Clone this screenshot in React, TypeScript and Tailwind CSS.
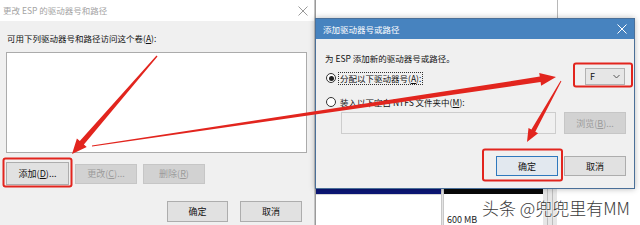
import React from "react";

const RED = "#e2251e";

function arrowPoints(
  x1: number, y1: number, x2: number, y2: number,
  w0: number, w1: number, hl: number, hw: number
): string {
  const dx = x2 - x1;
  const dy = y2 - y1;
  const len = Math.hypot(dx, dy);
  const ux = dx / len;
  const uy = dy / len;
  const nx = -uy;
  const ny = ux;
  const bx = x2 - ux * hl;
  const by = y2 - uy * hl;
  const p = (x: number, y: number) => `${x.toFixed(1)},${y.toFixed(1)}`;
  return [
    p(x1 + (nx * w0) / 2, y1 + (ny * w0) / 2),
    p(bx + (nx * w1) / 2, by + (ny * w1) / 2),
    p(bx + (nx * hw) / 2, by + (ny * hw) / 2),
    p(x2, y2),
    p(bx - (nx * hw) / 2, by - (ny * hw) / 2),
    p(bx - (nx * w1) / 2, by - (ny * w1) / 2),
    p(x1 - (nx * w0) / 2, y1 - (ny * w0) / 2),
  ].join(" ");
}

function CloseX({ color }: { color: string }) {
  return (
    <svg width="10" height="10" viewBox="0 0 10 10">
      <path d="M0.5 0.5 L9.5 9.5 M9.5 0.5 L0.5 9.5" stroke={color} strokeWidth="1" fill="none" />
    </svg>
  );
}

function Btn({
  children,
  w,
  h = 20,
  variant = "normal",
}: {
  children: React.ReactNode;
  w: number;
  h?: number;
  variant?: "normal" | "disabled" | "default";
}) {
  const cls =
    variant === "disabled"
      ? "bg-[#d2d2d2] border-[#c6c6c6] text-[#9b9b9b]"
      : variant === "default"
      ? "bg-[#e2e8ef] border-[#2f78bd] text-[#111]"
      : "bg-[#e1e1e1] border-[#adadad] text-[#111]";
  return (
    <div
      className={`flex items-center justify-center border text-[9px] leading-none ${cls}`}
      style={{ width: w, height: h }}
    >
      {children}
    </div>
  );
}

function Radio({ checked }: { checked: boolean }) {
  return (
    <div className="w-[10px] h-[10px] rounded-full border border-[#333] bg-white flex items-center justify-center">
      {checked && <div className="w-[5px] h-[5px] rounded-full bg-[#222]" />}
    </div>
  );
}

export default function App() {
  return (
    <div
      className="relative w-[640px] h-[225px] overflow-hidden bg-white text-[#111]"
      style={{ fontFamily: '"Noto Sans CJK SC", "Noto Sans", sans-serif' }}
    >
      {/* background window behind right dialog */}
      <div className="absolute left-[315px] top-0 w-[325px] h-[225px] border-l border-[#9a9a9a] bg-white">
        <div className="absolute left-[241px] top-0 w-px h-[18px] bg-[#b8b8b8]" />
        <div className="absolute left-0 top-[188px] w-[325px] h-[37px] flex">
          <div className="w-[125px] flex flex-col">
            <div className="h-[6px] bg-[#0c1676]" />
            <div className="h-px bg-[#d8d8d8]" />
            <div className="flex-1 bg-white" />
          </div>
          <div className="w-[3px] bg-[#e4e4e4] border-x border-[#c8c8c8]" />
          <div className="w-[99px] flex flex-col">
            <div className="h-[6px] bg-[#080808]" />
            <div className="flex-1 bg-white pl-[3px] pt-[21px] text-[9px] leading-none text-[#222]">600 MB</div>
          </div>
          <div className="w-[14px] bg-[#e6e6e6] flex justify-between px-[4px]">
            <div className="w-px bg-[#bdbdbd]" />
            <div className="w-px bg-[#bdbdbd]" />
          </div>
          <div className="flex-1 bg-white" />
        </div>
      </div>

      {/* left dialog */}
      <div className="absolute left-0 top-0 w-[315px] h-[225px] flex flex-col bg-[#f0f0f0] border-r border-[#c4c4c4]">
        <div className="h-[21px] bg-white flex items-center justify-between pl-[3px] pr-[6px] text-[8.5px] leading-none text-[#a3a3a3]">
          <span>更改 ESP 的驱动器号和路径</span>
          <CloseX color="#9a9a9a" />
        </div>
        <div className="flex flex-col pl-[6px] pt-[11px]">
          <div className="pl-[1px] h-[12px] leading-[12px] text-[8.5px]">
            可用下列驱动器号和路径访问这个卷(<u>A</u>):
          </div>
          <div className="mt-[8px] w-[301px] h-[101px] bg-white border border-[#ababab]" />
          <div className="mt-[9px] h-[23px] flex items-center gap-[6px]">
            <Btn w={63} h={23}>
              添加(<u>D</u>)...
            </Btn>
            <Btn w={62} variant="disabled">
              更改(<u>C</u>)...
            </Btn>
            <Btn w={62} variant="disabled">
              删除(<u>R</u>)
            </Btn>
          </div>
        </div>
        <div className="mt-[16px] flex justify-end gap-[12px] pr-[12px]">
          <Btn w={61} h={21}>确定</Btn>
          <Btn w={62} h={21}>取消</Btn>
        </div>
      </div>

      {/* right dialog */}
      <div className="absolute left-[315px] top-[18px] w-[320px] h-[171px] flex flex-col bg-[#f0f0f0] border border-[#4a6f98] shadow-[0_0_6px_rgba(0,0,0,0.28)]">
        <div className="h-[20px] bg-[#4783bf] flex items-center justify-between pl-[7px] pr-[7px] text-[8.5px] leading-none text-white">
          <span>添加驱动器号或路径</span>
          <CloseX color="#ffffff" />
        </div>
        <div className="flex flex-col pl-[9px] pr-[8px] pt-[13px]">
          <div className="h-[12px] leading-[12px] text-[8.5px]">为 ESP 添加新的驱动器号或路径。</div>
          <div className="mt-[4px] h-[20px] flex items-center">
            <div className="ml-px">
              <Radio checked />
            </div>
            <div className="ml-[2px] border border-dotted border-[#333] px-px h-[13px] flex items-center text-[8.5px] leading-none">
              分配以下驱动器号(<u>A</u>):
            </div>
            <div className="ml-auto self-start mr-px w-[40px] h-[17px] bg-[#e6e6e6] border border-[#b2b2b2] flex items-center justify-between pl-[4px] pr-[4px] text-[9px] leading-none">
              <span>F</span>
              <svg width="7" height="5" viewBox="0 0 7 5">
                <path d="M0.5 1 L3.5 4 L6.5 1" stroke="#555" strokeWidth="1" fill="none" />
              </svg>
            </div>
          </div>
          <div className="mt-[7px] h-[14px] flex items-center">
            <div className="ml-px">
              <Radio checked={false} />
            </div>
            <div className="ml-[3px] px-px text-[8.5px] leading-none">
              装入以下空白 NTFS 文件夹中(<u>M</u>):
            </div>
          </div>
          <div className="mt-[3px] flex items-center">
            <div className="ml-[16px] w-[215px] h-[22px] border border-[#cdcdcd] bg-[#f0f0f0]" />
            <div className="ml-auto">
              <Btn w={62} h={22} variant="disabled">
                浏览(<u>B</u>)...
              </Btn>
            </div>
          </div>
          <div className="mt-[22px] flex justify-end gap-[6px]">
            <Btn w={62} variant="default">确定</Btn>
            <Btn w={62}>取消</Btn>
          </div>
        </div>
      </div>

      {/* annotations */}
      <svg className="absolute left-0 top-0" width="640" height="225" viewBox="0 0 640 225">
        <rect x="3.5" y="158.5" width="68" height="28" rx="2" fill="none" stroke={RED} strokeWidth="2" />
        <rect x="574" y="63.5" width="58" height="23" rx="2" fill="none" stroke={RED} strokeWidth="2" />
        <rect x="483" y="149.5" width="79" height="31" rx="2" fill="none" stroke={RED} strokeWidth="2" />
        <polygon points={arrowPoints(157, 56, 72, 154, 1.2, 5.5, 15, 13)} fill={RED} />
        <polygon points={arrowPoints(92, 146, 556, 77, 1, 5.5, 16, 13)} fill={RED} />
        <polygon points={arrowPoints(561, 81, 527, 142, 1, 4.5, 13, 11)} fill={RED} />
      </svg>

      {/* watermark */}
      <div
        className="absolute left-[482px] top-[197px] text-[17px] leading-[22px] font-light text-[#3a3a3a] whitespace-nowrap"
        style={{ textShadow: "0 0 2px #fff, 0 0 2px #fff" }}
      >
        头条 @兜兜里有MM
      </div>
    </div>
  );
}
